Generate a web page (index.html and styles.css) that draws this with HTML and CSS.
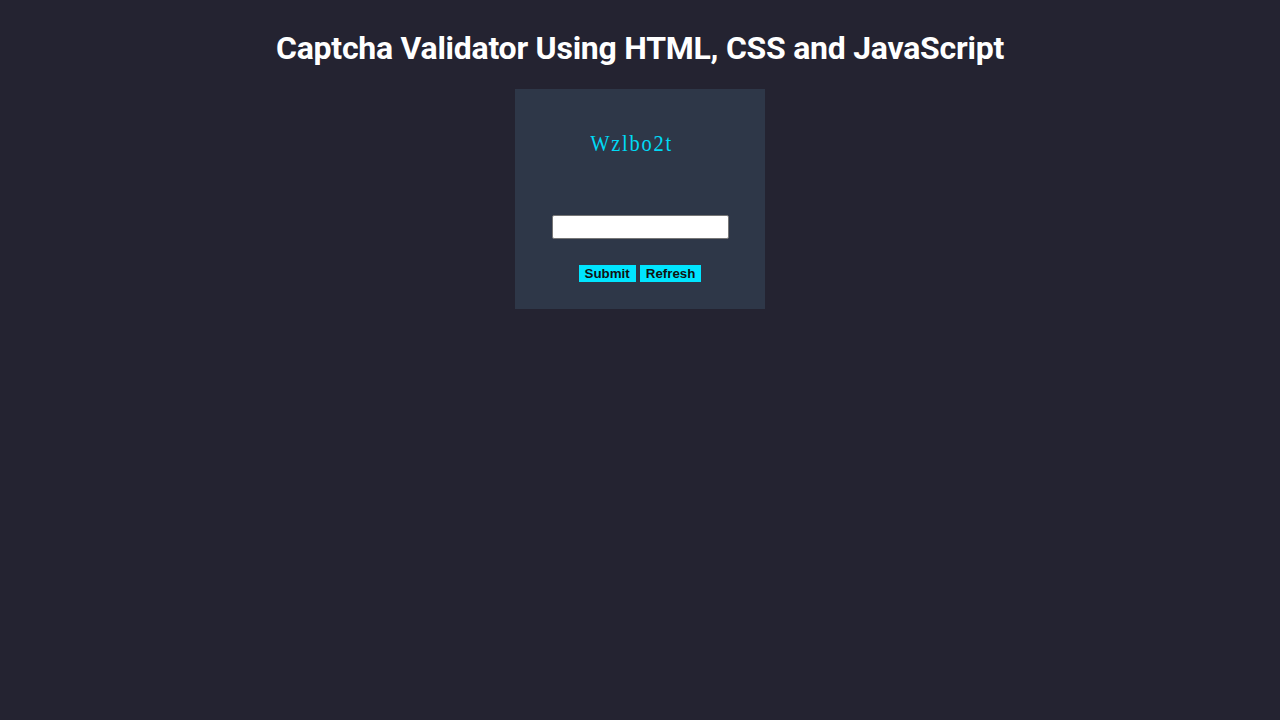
FILE: index.html
```html
<!DOCTYPE html>
<html>
<head>
<meta charset="utf-8">
<link rel="stylesheet" href="styles.css">
</head>
<body>
<h1 class="title">Captcha Validator Using HTML, CSS and JavaScript</h1>
<div class="card">
  <div class="captcha">Wzlbo2t</div>
  <input class="answer" type="text">
  <div class="actions">
    <button class="btn">Submit</button>
    <button class="btn">Refresh</button>
  </div>
</div>
</body>
</html>
```
FILE: styles.css
```css
html, body {
  margin: 0;
  padding: 0;
  background: #242331;
  height: 100%;
}
body {
  display: flex;
  flex-direction: column;
  align-items: center;
  font-family: Roboto, "Liberation Sans", sans-serif;
}
.title {
  margin: 29px 0 22px;
  color: #ffffff;
  font-family: Roboto, sans-serif;
  font-weight: 700;
  font-size: 32px;
  line-height: 38px;
  letter-spacing: -0.25px;
}
.card {
  width: 250px;
  height: 220px;
  box-sizing: border-box;
  background: #2e3748;
  display: flex;
  flex-direction: column;
  align-items: center;
  padding-top: 42px;
}
.captcha {
  font-family: "Liberation Serif", serif;
  color: #00d9f5;
  font-size: 23px;
  letter-spacing: 2px;
  line-height: 26px;
  margin-left: -17px;
  transform: scaleX(0.89);
}
.answer {
  margin-top: 58px;
  width: 177px;
  height: 24px;
  box-sizing: border-box;
  border: 1px solid #767676;
  border-radius: 2px;
  background: #fff;
  padding: 0 4px;
}
.actions {
  margin-top: 26px;
  display: flex;
  gap: 4px;
}
.btn {
  height: 17px;
  border: none;
  background: #00e5ff;
  color: #111;
  font-family: "Liberation Sans", Arial, sans-serif;
  font-weight: 700;
  font-size: 13.33px;
  padding: 0 6px;
  line-height: 17px;
}
```
